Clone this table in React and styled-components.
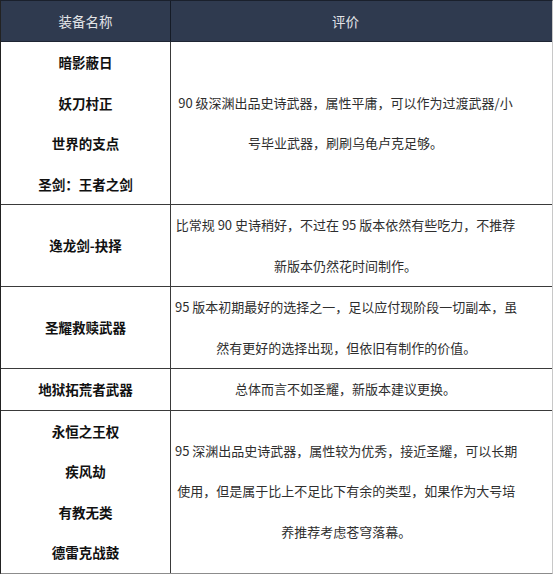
import React from 'react';
import styled, { createGlobalStyle } from 'styled-components';

const GlobalStyle = createGlobalStyle`
  body {
    margin: 0;
    background: #fff;
    font-family: "Microsoft YaHei", "Noto Sans CJK SC", sans-serif;
  }
`;

const Table = styled.div`
  width: 553px;
  box-sizing: border-box;
  border-top: 1px solid #1a202c;
  border-left: 1px solid #222;
  border-right: 1px solid #c8c8c8;
  border-bottom: 2px solid #8c8c8c;
`;

const Row = styled.div`
  display: grid;
  grid-template-columns: 170px 1fr;
  border-bottom: ${p => (p.$last ? 'none' : '1px solid #3a3a3a')};
`;

const HeadRow = styled(Row)`
  height: 40px;
  background: #2f3a4f;
  border-bottom: 1px solid #1e2533;
`;

const HeadCell = styled.div`
  display: flex;
  align-items: center;
  justify-content: center;
  color: #e2e4e8;
  font-size: 13.5px;
  border-right: ${p => (p.$first ? '1px solid #151b26' : 'none')};
  padding-right: ${p => (p.$first ? '0' : '32px')};
`;

const NameCell = styled.div`
  display: flex;
  flex-direction: column;
  justify-content: center;
  align-items: center;
  border-right: 1px solid #3a3a3a;
  font-weight: bold;
  font-size: 13.5px;
  color: #111;
  line-height: 40.5px;
`;

const DescCell = styled.div`
  display: flex;
  flex-direction: column;
  justify-content: center;
  padding: 0 36px 0 4px;
  font-size: 13px;
  color: #2e2e2e;
  line-height: 40.5px;
  text-align: center;
`;

const Line = styled.span`
  display: block;
  white-space: nowrap;
`;

const rows = [
  {
    names: ['暗影蔽日', '妖刀村正', '世界的支点', '圣剑：王者之剑'],
    desc: ['90 级深渊出品史诗武器，属性平庸，可以作为过渡武器/小', '号毕业武器，刷刷乌龟卢克足够。'],
  },
  {
    names: ['逸龙剑-抉择'],
    desc: ['比常规 90 史诗稍好，不过在 95 版本依然有些吃力，不推荐', '新版本仍然花时间制作。'],
  },
  {
    names: ['圣耀救赎武器'],
    desc: ['95 版本初期最好的选择之一，足以应付现阶段一切副本，虽', '然有更好的选择出现，但依旧有制作的价值。'],
  },
  {
    names: ['地狱拓荒者武器'],
    desc: ['总体而言不如圣耀，新版本建议更换。'],
  },
  {
    names: ['永恒之王权', '疾风劫', '有教无类', '德雷克战鼓'],
    desc: [
      '95 深渊出品史诗武器，属性较为优秀，接近圣耀，可以长期',
      '使用，但是属于比上不足比下有余的类型，如果作为大号培',
      '养推荐考虑苍穹落幕。',
    ],
  },
];

const App = () => {
  return (
    <>
      <GlobalStyle />
      <Table>
        <HeadRow>
          <HeadCell $first>装备名称</HeadCell>
          <HeadCell>评价</HeadCell>
        </HeadRow>
        {rows.map((row, i) => (
          <Row key={row.names[0]} $last={i === rows.length - 1}>
            <NameCell>
              {row.names.map(name => (
                <Line key={name}>{name}</Line>
              ))}
            </NameCell>
            <DescCell>
              {row.desc.map(text => (
                <Line key={text}>{text}</Line>
              ))}
            </DescCell>
          </Row>
        ))}
      </Table>
    </>
  );
};

export default App;
